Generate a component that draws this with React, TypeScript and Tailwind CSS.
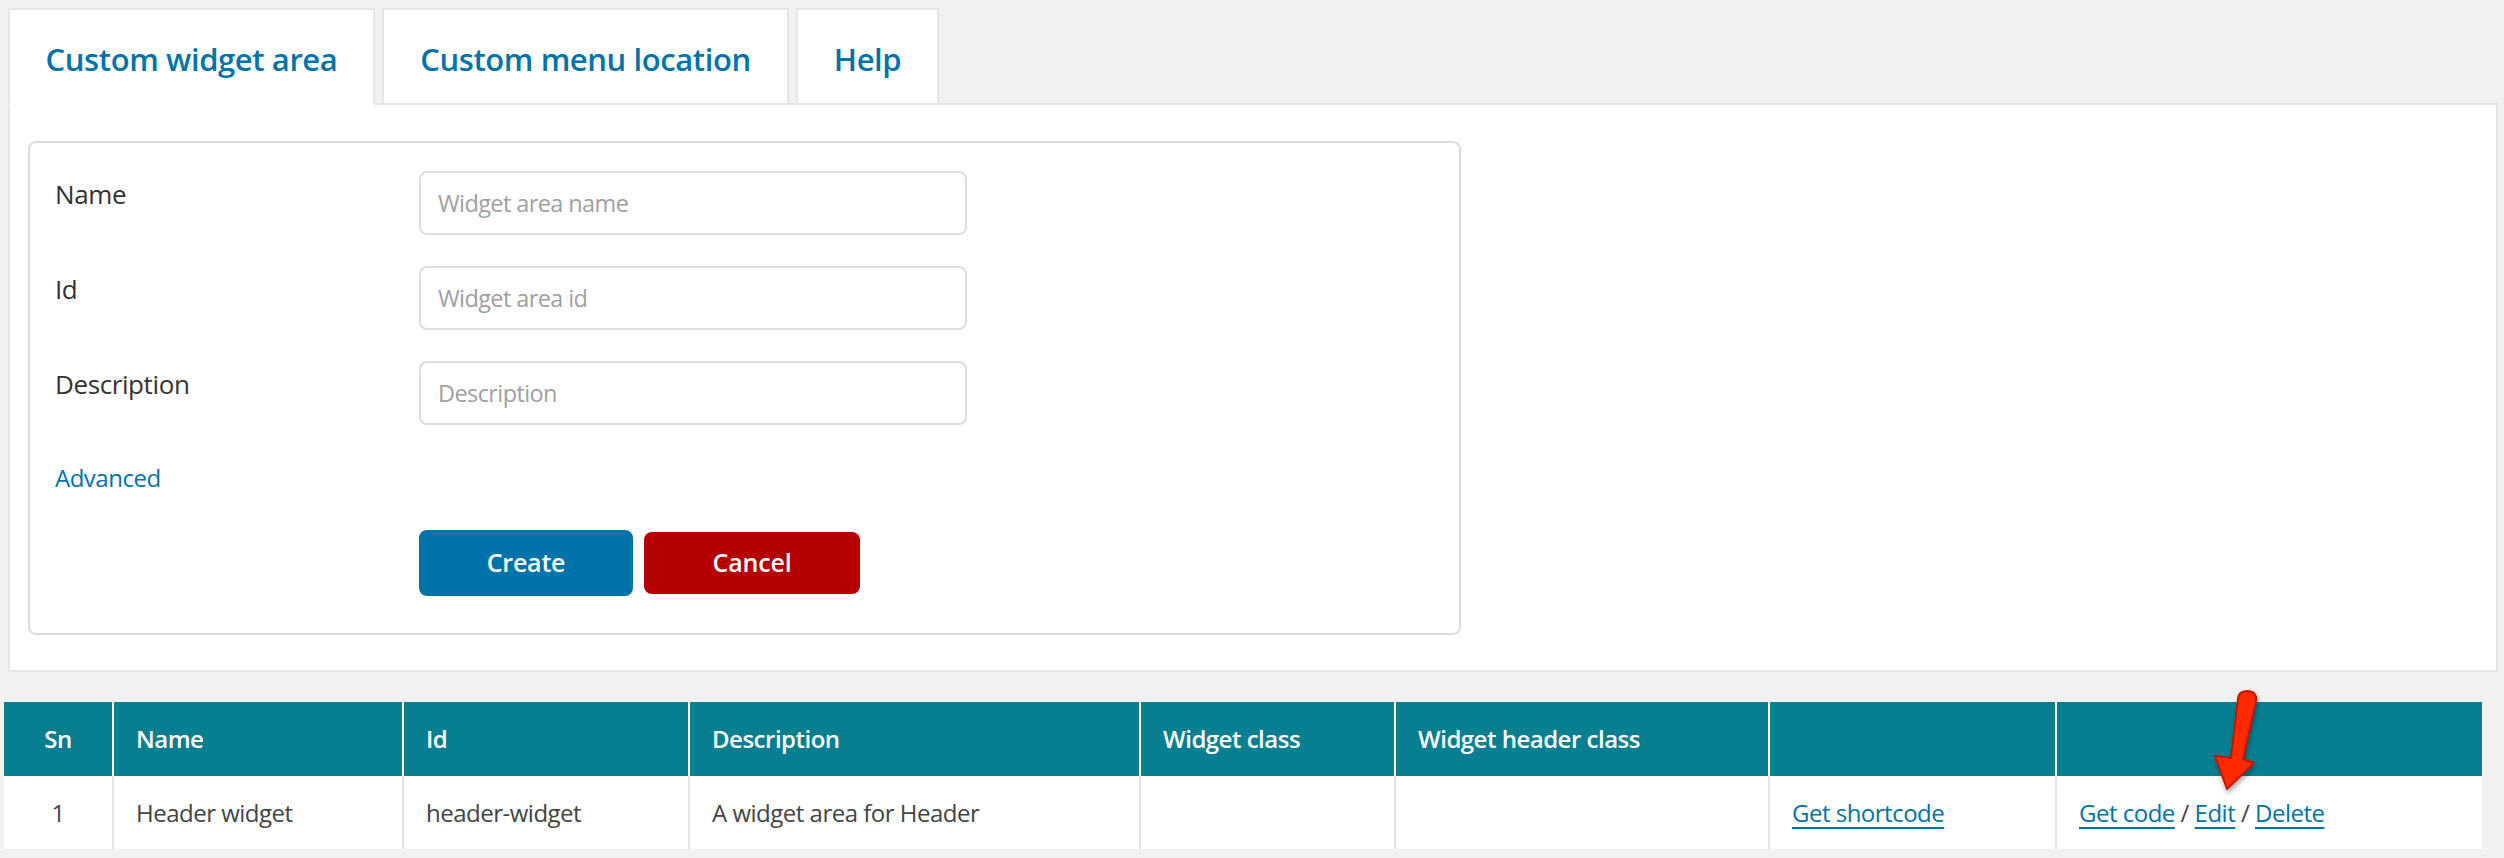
import React from "react";

const tabs = [
  { label: "Custom widget area", w: "w-[367px]", active: true },
  { label: "Custom menu location", w: "w-[407px]", active: false },
  { label: "Help", w: "w-[143px]", active: false },
];

const fields = [
  { label: "Name", placeholder: "Widget area name" },
  { label: "Id", placeholder: "Widget area id" },
  { label: "Description", placeholder: "Description" },
];

const headers = ["Sn", "Name", "Id", "Description", "Widget class", "Widget header class", "", ""];
const colWidths = ["w-[109px]", "w-[290px]", "w-[286px]", "w-[451px]", "w-[255px]", "w-[374px]", "w-[287px]", "w-[426px]"];

function Arrow() {
  return (
    <svg
      className="absolute left-[2201px] top-[-14px] w-[64px] h-[112px] pointer-events-none"
      viewBox="0 0 64 112"
    >
      <defs>
        <filter id="sh" x="-40%" y="-20%" width="180%" height="150%">
          <feDropShadow dx="1" dy="3" stdDeviation="2.5" floodColor="#000" floodOpacity="0.35" />
        </filter>
      </defs>
      <path
        d="M33 12 Q33 3 42 3 Q52 3 51 13 L38 71 L49 75 L22 101 L10 68 L26 70 Z"
        fill="#ff2a00"
        stroke="#c41800"
        strokeWidth="2"
        strokeLinejoin="round"
        filter="url(#sh)"
      />
    </svg>
  );
}

const linkCls = "text-[#0073aa] underline decoration-2 underline-offset-[5px]";

export default function App() {
  return (
    <div className="min-h-screen bg-[#f1f1f1] font-['Open_Sans','Noto_Sans',sans-serif] pt-[8px] pb-[9px]">
      <div className="ml-[8px] mr-[6px]">
        <div className="flex gap-[7px]">
          {tabs.map((t) => (
            <div
              key={t.label}
              className={`${t.w} h-[97px] flex items-center justify-center pt-[6px] bg-white border-2 border-[#e5e5e5] text-[#0073aa] text-[31px] font-semibold tracking-[-0.4px] ${
                t.active ? "border-b-white relative z-10" : ""
              }`}
            >
              {t.label}
            </div>
          ))}
        </div>
        <div className="-mt-[2px] border-2 border-[#e5e5e5] bg-white pt-[36px] pl-[18px] pb-[35px]">
          <div className="w-[1433px] rounded-[8px] border-2 border-[#dcdcdc] pt-[28px] pl-[25px] pb-[37px]">
            <div className="flex flex-col gap-[31px]">
              {fields.map((f) => (
                <div key={f.label} className="flex">
                  <div className="w-[364px] pt-[6px] text-[26px] tracking-[-0.4px] leading-[34px] text-[#333]">
                    {f.label}
                  </div>
                  <input
                    className="w-[548px] h-[64px] rounded-[8px] border-2 border-[#dedede] px-[17px] text-[23.5px] tracking-[-0.6px] text-[#333] placeholder:text-[#a0a0a0] outline-none"
                    placeholder={f.placeholder}
                  />
                </div>
              ))}
            </div>
            <div className="mt-[36px] text-[24px] tracking-[-0.5px] leading-[34px] text-[#0073aa]">Advanced</div>
            <div className="mt-[35px] ml-[364px] flex items-center gap-[11px]">
              <button className="w-[214px] h-[66px] rounded-[8px] bg-[#0073aa] text-white text-[25px] tracking-[-0.2px] font-semibold">
                Create
              </button>
              <button className="w-[216px] h-[62px] rounded-[8px] bg-[#b40000] text-white text-[25px] tracking-[-0.2px] font-semibold">
                Cancel
              </button>
            </div>
          </div>
        </div>
      </div>

      <div className="relative ml-[4px] mt-[30px] w-[2478px]">
        <table className="w-[2478px] table-fixed border-collapse">
          <colgroup>
            {colWidths.map((w, i) => (
              <col key={i} className={w} />
            ))}
          </colgroup>
          <thead>
            <tr>
              {headers.map((h, i) => (
                <th
                  key={i}
                  className={`h-[74px] bg-[#077f91] text-white text-[24px] tracking-[-0.5px] font-semibold align-middle ${
                    i === 0 ? "text-center" : "text-left pl-[22px] border-l-2 border-white"
                  }`}
                >
                  {h}
                </th>
              ))}
            </tr>
          </thead>
          <tbody>
            <tr className="text-[24px] tracking-[-0.5px] text-[#444]">
              <td className="h-[73px] bg-white text-center align-middle">1</td>
              <td className="bg-white pl-[22px] border-l-2 border-[#dde6e9]">Header widget</td>
              <td className="bg-white pl-[22px] border-l-2 border-[#dde6e9]">header-widget</td>
              <td className="bg-white pl-[22px] border-l-2 border-[#dde6e9]">A widget area for Header</td>
              <td className="bg-white pl-[22px] border-l-2 border-[#dde6e9]"></td>
              <td className="bg-white pl-[22px] border-l-2 border-[#dde6e9]"></td>
              <td className="bg-white pl-[22px] border-l-2 border-[#dde6e9]">
                <a href="#" className={linkCls}>
                  Get shortcode
                </a>
              </td>
              <td className="bg-white pl-[22px] border-l-2 border-[#dde6e9]">
                <a href="#" className={linkCls}>
                  Get code
                </a>{" "}
                /{" "}
                <a href="#" className={linkCls}>
                  Edit
                </a>{" "}
                /{" "}
                <a href="#" className={linkCls}>
                  Delete
                </a>
              </td>
            </tr>
          </tbody>
        </table>
        <Arrow />
      </div>
    </div>
  );
}
